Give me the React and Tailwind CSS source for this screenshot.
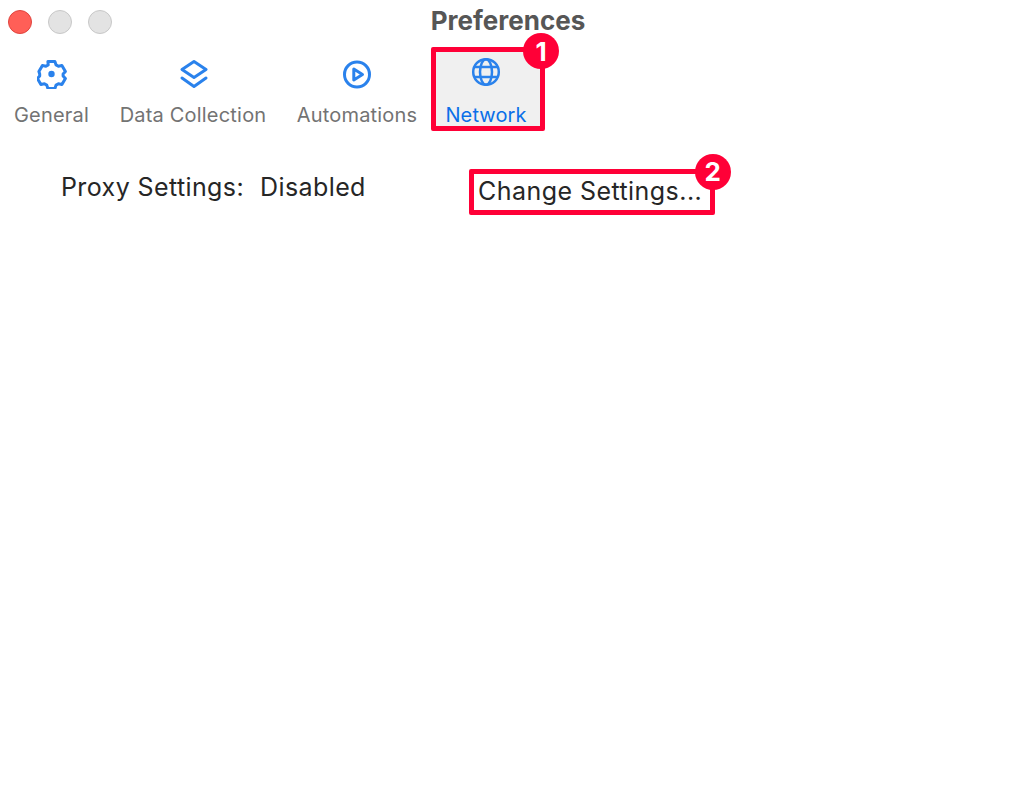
const tabs = [
  { name: 'General', width: 'w-[103px]', icon: <GearIcon /> },
  { name: 'Data Collection', width: 'w-[180px]', icon: <LayersIcon /> },
  { name: 'Automations', width: 'w-[148px]', icon: <PlayIcon /> },
]

function GearIcon() {
  return (
    <svg width="30" height="30" viewBox="0 0 30 30" fill="none" stroke="currentColor" strokeWidth="3" strokeLinejoin="round">
      <path d="M11.500 3h7l1.200 3.400 2.300 1.300 3.500-.7 3.500 6-2.300 2.500v2l2.300 2.500-3.500 6-3.500-.7-2.300 1.300-1.200 3.400h-7l-1.200-3.400-2.300-1.300-3.500.7-3.500-6 2.300-2.500v-2L2.500 13l3.500-6 3.500.7 2.300-1.300z" transform="translate(-.6 -.5)" />
      <circle cx="14.500" cy="15" r="3.200" fill="currentColor" stroke="none" />
    </svg>
  )
}

function LayersIcon() {
  return (
    <svg width="30" height="30" viewBox="0 0 30 30" fill="none" stroke="currentColor" strokeWidth="3" strokeLinejoin="round" strokeLinecap="round">
      <path d="M16 2.500 28 10.500 16 18.500 4 10.500z" />
      <path d="M4 19 16 27.500 28 19" />
    </svg>
  )
}

function PlayIcon() {
  return (
    <svg width="30" height="30" viewBox="0 0 30 30" fill="none" stroke="currentColor" strokeWidth="3" strokeLinejoin="round">
      <circle cx="15" cy="15.500" r="12.500" />
      <path d="M11.800 10 20.500 15.500l-8.700 5.500z" />
    </svg>
  )
}

function GlobeIcon() {
  return (
    <svg width="30" height="30" viewBox="0 0 30 30" fill="none" stroke="currentColor" strokeWidth="2.500">
      <circle cx="15" cy="15" r="12.800" />
      <ellipse cx="15" cy="15" rx="6" ry="12.800" />
      <path d="M3.500 10h23M3.500 20h23" />
    </svg>
  )
}

function Badge({ n, className }) {
  return (
    <span className={`absolute flex h-[36px] w-[36px] items-center justify-center rounded-full bg-[#ff0037] text-[26px] font-bold text-white ${className}`}>
      {n}
    </span>
  )
}

export default function App() {
  return (
    <div className="h-[808px] w-full bg-white font-['Inter',sans-serif] text-[#262626]">
      <div className="grid h-[47px] grid-cols-[112px_1fr_112px] items-start">
        <div className="flex gap-[16px] pl-[8px] pt-[10px]">
          <span className="h-[24px] w-[24px] rounded-full border border-[#e0443e] bg-[#ff5f57]" />
          <span className="h-[24px] w-[24px] rounded-full border border-[#c8c8c8] bg-[#e3e3e3]" />
          <span className="h-[24px] w-[24px] rounded-full border border-[#c8c8c8] bg-[#e3e3e3]" />
        </div>
        <div className="pr-[8px] pt-[5px] text-center text-[26px] font-bold leading-[32px] text-[#565656]">Preferences</div>
      </div>

      <div className="flex h-[84px]">
        {tabs.map((tab) => (
          <div key={tab.name} className={`flex flex-col items-center pt-[12px] ${tab.width}`}>
            <span className="text-[#2a82ec]">{tab.icon}</span>
            <span className="mt-[12px] text-[20px] leading-[28px] tracking-[0.2px] text-[#737373]">{tab.name}</span>
          </div>
        ))}
        <div className="relative flex w-[114px] flex-col items-center rounded-[2px] border-[5px] border-[#ff0037] bg-[#f0f0f0] pt-[5px] pr-[4px]">
          <span className="text-[#2a82ec]"><GlobeIcon /></span>
          <span className="mt-[14px] text-[20px] leading-[28px] tracking-[0.1px] text-[#0a6fe8]">Network</span>
          <Badge n="1" className="right-[-19px] top-[-19px]" />
        </div>
      </div>

      <div className="flex items-start pl-[61px] pt-[38px]">
        <div className="flex w-[408px] gap-[16px] pt-[2px] text-[25px] leading-[32px] tracking-[0.4px]">
          <span>Proxy Settings:</span>
          <span>Disabled</span>
        </div>
        <div className="relative h-[46px] w-[246px] rounded-[2px] border-[5px] border-[#ff0037] pl-[4px] text-[25px] leading-[34px] tracking-[0.45px]">
          Change Settings...
          <Badge n="2" className="right-[-21px] top-[-20px]" />
        </div>
      </div>
    </div>
  )
}
